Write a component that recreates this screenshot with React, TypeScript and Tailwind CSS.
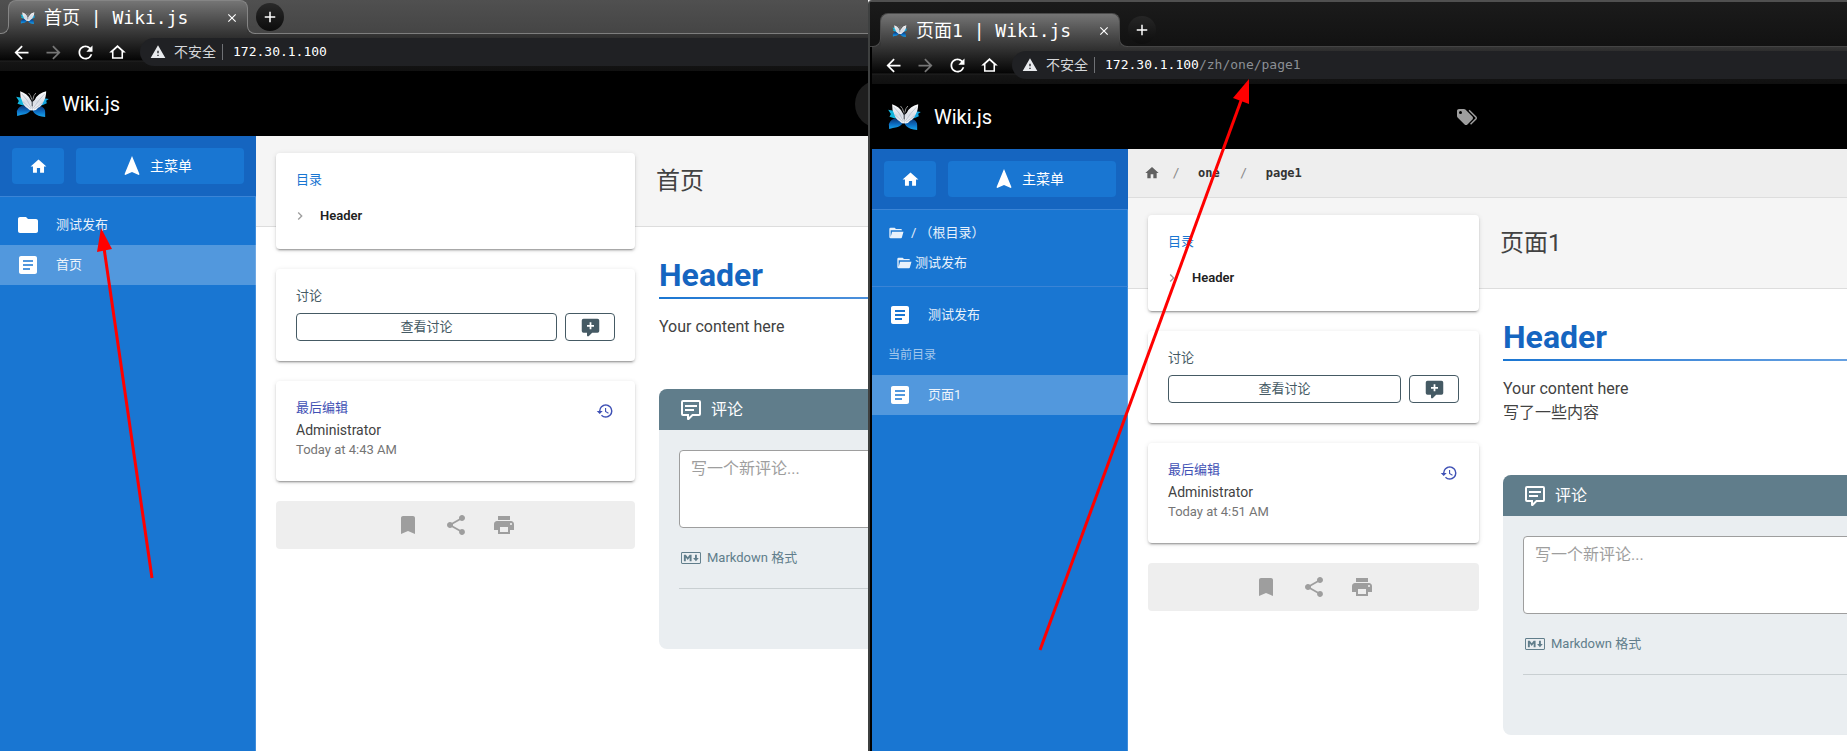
import type { ReactNode } from 'react';
import {
  MdArrowBack,
  MdArrowForward,
  MdArticle,
  MdBookmark,
  MdChevronRight,
  MdClose,
  MdFolder,
  MdHistory,
  MdHome,
  MdNavigation,
  MdAdd,
  MdPrint,
  MdRefresh,
  MdShare,
  MdWarning,
} from 'react-icons/md';

const PATHS = {
  browserHome: 'M12 5.69l5 4.5V18H7v-7.81l5-4.5M12 2.6L1.5 12H5v8h14v-8h3.5L12 2.6z',
  folderOpen:
    'M19 20H4a2 2 0 0 1-2-2V6a2 2 0 0 1 2-2h6l2 2h7a2 2 0 0 1 2 2H4v10l2.14-8h17.07l-2.28 8.5c-.23.87-1.01 1.5-1.93 1.5z',
  commentText:
    'M9 22a1 1 0 0 1-1-1v-3H4a2 2 0 0 1-2-2V4a2 2 0 0 1 2-2h16a2 2 0 0 1 2 2v12a2 2 0 0 1-2 2h-6.1l-3.7 3.71c-.2.19-.45.29-.7.29H9m1-6v3.08L13.08 16H20V4H4v12h6M6 7h12v2H6V7m0 4h9v2H6v-2z',
  commentPlus:
    'M9 22a1 1 0 0 1-1-1v-3H4a2 2 0 0 1-2-2V4a2 2 0 0 1 2-2h16a2 2 0 0 1 2 2v12a2 2 0 0 1-2 2h-6.1l-3.7 3.71c-.2.19-.45.29-.7.29H9m2-16v3H8v2h3v3h2v-3h3V9h-3V6h-2z',
  markdown:
    'M20.56 18H3.44C2.65 18 2 17.37 2 16.59V7.41C2 6.63 2.65 6 3.44 6h17.12c.79 0 1.44.63 1.44 1.41v9.18c0 .78-.65 1.41-1.44 1.41M3.44 6.94c-.26 0-.48.21-.48.47v9.18c0 .26.22.47.48.47h17.12c.26 0 .48-.21.48-.47V7.41c0-.26-.22-.47-.48-.47H3.44m1.45 8.25V8.81h1.92l1.92 2.35 1.93-2.35h1.92v6.38h-1.92v-3.66l-1.93 2.35-1.92-2.35v3.66H4.89m12.04 0l-2.88-3.1h1.92V8.81h1.92v3.28h1.92l-2.88 3.1',
  tags: 'M5.5 9A1.5 1.5 0 0 0 7 7.5 1.5 1.5 0 0 0 5.5 6 1.5 1.5 0 0 0 4 7.5 1.5 1.5 0 0 0 5.5 9m11.91 2.58c.36.36.59.86.59 1.42 0 .55-.22 1.05-.59 1.41l-5 5a1.996 1.996 0 0 1-2.83 0l-6.99-7C2.22 12.05 2 11.55 2 11V6c0-1.11.89-2 2-2h5c.55 0 1.05.22 1.41.58l7 7m-3.87-5.87 1-1 6.87 6.87c.37.36.59.87.59 1.42 0 .55-.22 1.05-.58 1.41l-5.38 5.38-1-1L20.75 13l-7.21-7.29z',
};

function Glyph({ path, className }: { path: string; className: string }) {
  return (
    <svg viewBox="0 0 24 24" fill="currentColor" fillRule="evenodd" aria-hidden="true" className={className}>
      <path d={path} />
    </svg>
  );
}

function Butterfly({ id, className }: { id: string; className: string }) {
  return (
    <svg viewBox="0 0 98 78" aria-hidden="true" className={className}>
      <defs>
        <linearGradient id={`${id}-wing`} x1="0" y1="0" x2="0" y2="1">
          <stop offset="0" stopColor="#ffffff" />
          <stop offset="0.55" stopColor="#d9dde5" />
          <stop offset="1" stopColor="#f5f7fa" />
        </linearGradient>
        <linearGradient id={`${id}-low`} x1="0" y1="0" x2="0" y2="1">
          <stop offset="0" stopColor="#0a3474" />
          <stop offset="0.55" stopColor="#0d6fc4" />
          <stop offset="1" stopColor="#17a5ec" />
        </linearGradient>
      </defs>
      <path d="M0 17 L16 20 L30 46 L18 43 L4 38 L8 30 Z" fill="#12b5dc" />
      <path d="M98 24 L84 22 L66 46 L80 42 L92 37 L90 29 Z" fill="#12a5e0" />
      <path d="M3 75 L2 60 Q10 42 28 44 L46 54 Q40 66 26 70 Q14 72 3 75 Z" fill={`url(#${id}-low)`} />
      <path d="M87 78 Q64 76 54 66 L46 54 L72 44 Q88 50 87 64 Z" fill={`url(#${id}-low)`} />
      <path d="M12 1 Q34 8 43 26 L48 34 L48 58 Q40 60 34 52 Q22 46 18 30 Q11 18 12 1 Z" fill={`url(#${id}-wing)`} />
      <path d="M90 1 Q66 6 56 26 L48 34 L48 58 Q60 60 66 50 Q76 46 82 32 Q90 20 90 1 Z" fill={`url(#${id}-wing)`} />
      <path d="M16 8 Q34 24 46 52 M86 8 Q68 26 51 52 M20 32 Q32 42 44 54 M80 34 Q68 44 54 54" fill="none" stroke="#aeb6c4" strokeWidth="2" />
      <path d="M47 26 Q44 12 37 6 M50 26 Q52 12 59 6" fill="none" stroke="#8f8f8f" strokeWidth="3" />
      <path d="M48 26 L48 46" stroke="#3c434e" strokeWidth="3" />
    </svg>
  );
}

type Tone = 'light' | 'dark';

function TabStrip({ title, tone, id }: { title: string; tone: Tone; id: string }) {
  const light = tone === 'light';
  const strip = light
    ? 'border-[#7e7e7e] bg-linear-to-b from-[#505050] to-[#454545]'
    : 'border-[#444444] bg-linear-to-b from-[#1b1b1b] to-[#121212] pl-[2px] pt-[11px]';
  const edge = light ? 'border-[#858585]' : 'border-[#4c4c4c]';
  const curve = light ? 'bg-[#464646]' : 'bg-[#131313]';
  return (
    <div className={`flex items-end border-b ${strip}`}>
      <span className="relative z-10 -mr-px -mb-px h-2 w-[9px] bg-[#353535]">
        <span className={`block h-full rounded-br-lg border-r border-b ${edge} ${curve}`} />
      </span>
      <div
        className={`-mb-px flex h-[34px] w-60 items-center rounded-t-lg border-x border-t bg-linear-to-b from-[#757575] to-[#353535] pr-2 pl-[11px] ${edge}`}
      >
        <Butterfly id={`${id}-tab`} className="h-3 w-4 shrink-0" />
        <span className="ml-2 flex-1 font-['DejaVu_Sans_Mono','Noto_Sans_CJK_SC',monospace] text-[18px] leading-6 whitespace-pre text-white">
          {title}
        </span>
        <button type="button" aria-label="关闭标签页" className="text-white">
          <MdClose className="size-[14px]" />
        </button>
      </div>
      <span className="relative z-10 -mb-px -ml-px h-2 w-[9px] bg-[#353535]">
        <span className={`block h-full rounded-bl-lg border-b border-l ${edge} ${curve}`} />
      </span>
      <button
        type="button"
        aria-label="新标签页"
        className={`mb-[2px] flex size-7 items-center justify-center rounded-full text-white ${
          light ? 'bg-linear-to-b from-[#2a2a2a] to-[#0c0c0c]' : 'bg-linear-to-b from-[#262626] to-[#0e0e0e]'
        }`}
      >
        <MdAdd className="size-[18px]" />
      </button>
    </div>
  );
}

function Toolbar({ host, path }: { host: string; path: string }) {
  return (
    <div className="flex bg-[linear-gradient(to_bottom,#353535_0px,#050505_26px,#222222_27px,#151515_28px,#101010_37px)] pt-1 pb-[5px] pl-[5px] text-white">
      <button type="button" aria-label="后退" className="flex w-8 items-center justify-center">
        <MdArrowBack className="size-[21px]" />
      </button>
      <button type="button" aria-label="前进" className="flex w-8 items-center justify-center text-[#767676]">
        <MdArrowForward className="size-[21px]" />
      </button>
      <button type="button" aria-label="重新加载" className="flex w-8 items-center justify-center">
        <MdRefresh className="size-[21px]" />
      </button>
      <button type="button" aria-label="主页" className="flex w-8 items-center justify-center">
        <Glyph path={PATHS.browserHome} className="size-[19px]" />
      </button>
      <div className="ml-[7px] flex h-7 flex-1 items-center rounded-l-full bg-[#202124] pl-[10px] whitespace-nowrap">
        <MdWarning className="size-4 text-[#e8eaed]" />
        <span className="ml-2 text-sm text-[#d5d7da]">不安全</span>
        <span className="mx-[6px] h-4 w-px bg-[#6f7175]" />
        <span className="pl-1 font-['DejaVu_Sans_Mono',monospace] text-[13px] text-white">
          {host}
          <span className="text-[#8b8f94]">{path}</span>
        </span>
      </div>
    </div>
  );
}

function NavItem({ icon, label, active = false }: { icon: ReactNode; label: string; active?: boolean }) {
  return (
    <a
      href="#page"
      className={`flex h-10 items-center gap-4 px-4 text-[13px] text-white ${active ? 'bg-white/25' : ''}`}
    >
      {icon}
      <span className="opacity-90">{label}</span>
    </a>
  );
}

function Sidebar({ children }: { children: ReactNode }) {
  return (
    <nav className="w-64 shrink-0 bg-[#1976d2] shadow-[inset_-1px_0_0_#3f8ddb]">
      <div className="flex gap-3 border-b border-[#3a84d6] bg-[#1565c0] p-3 text-white">
        <a href="#home" aria-label="首页" className="flex h-9 w-[52px] items-center justify-center rounded bg-[#1976d2]">
          <MdHome className="size-[19px]" />
        </a>
        <button
          type="button"
          className="flex h-9 flex-1 items-center justify-center gap-[6px] rounded bg-[#1976d2] pr-2 text-sm"
        >
          <MdNavigation className="size-6" />
          主菜单
        </button>
      </div>
      {children}
    </nav>
  );
}

const CARD =
  'rounded bg-white px-5 shadow-[0_3px_1px_-2px_rgba(0,0,0,0.2),0_2px_2px_0_rgba(0,0,0,0.14),0_1px_5px_0_rgba(0,0,0,0.12)]';

function InfoColumn({ edited }: { edited: string }) {
  return (
    <aside className="col-start-1 row-span-2 row-start-1 flex flex-col gap-5 pt-[17px] pl-5">
      <section className={`${CARD} h-24 pt-[17px]`}>
        <h2 className="text-[13px] leading-5 text-[#1976d2]">目录</h2>
        <a href="#header" className="mt-4 flex items-center gap-3 text-[13px] leading-5 font-semibold text-[#212121]">
          <MdChevronRight className="-ml-1 size-4 text-[#9e9e9e]" />
          Header
        </a>
      </section>
      <section className={`${CARD} pt-[17px] pb-5 text-[#455a64]`}>
        <h2 className="text-[13px] leading-5">讨论</h2>
        <div className="mt-[7px] flex gap-2">
          <button type="button" className="h-7 flex-1 rounded border border-[#455a64] text-[13px]">
            查看讨论
          </button>
          <button
            type="button"
            aria-label="新评论"
            className="flex h-7 w-[50px] items-center justify-center rounded border border-[#455a64]"
          >
            <Glyph path={PATHS.commentPlus} className="size-[21px]" />
          </button>
        </div>
      </section>
      <section className={`${CARD} flex h-[100px] justify-between pt-[17px]`}>
        <div>
          <h2 className="text-[13px] leading-5 text-[#3f51b5]">最后编辑</h2>
          <p className="text-sm leading-6 text-[#424242]">Administrator</p>
          <p className="text-[13px] leading-4 text-[#757575]">{edited}</p>
        </div>
        <button type="button" aria-label="历史" className="mt-1 mr-[1px] self-start text-[#3f51b5]">
          <MdHistory className="size-[18px]" />
        </button>
      </section>
      <div className="flex h-12 items-center justify-center gap-6 rounded bg-[#eeeeee] text-[#9e9e9e]">
        <button type="button" aria-label="书签">
          <MdBookmark className="size-6" />
        </button>
        <button type="button" aria-label="分享">
          <MdShare className="size-6" />
        </button>
        <button type="button" aria-label="打印">
          <MdPrint className="size-6" />
        </button>
      </div>
    </aside>
  );
}

function Article({ lines }: { lines: string[] }) {
  return (
    <article className="col-start-2 row-start-2 min-w-[700px] pt-7 pl-6">
      <h2 className="pb-[2px] text-[32px] leading-10 font-bold text-[#1565c0]">Header</h2>
      <div className="h-[2px] bg-linear-to-r from-[#1976d2] to-[#a3c8ed]" />
      <div className="mt-4 text-base leading-6 text-[#424242]">
        {lines.map((line) => (
          <p key={line}>{line}</p>
        ))}
      </div>
      <section className="mt-[50px] overflow-hidden rounded-lg bg-[#eaeef1] pb-[60px]">
        <h3 className="flex h-[41px] items-center gap-2 bg-[#607d8b] px-5 text-base text-white">
          <Glyph path={PATHS.commentText} className="size-6" />
          评论
        </h3>
        <div className="px-5 pt-5">
          <textarea
            aria-label="写一个新评论"
            placeholder="写一个新评论..."
            className="block h-[78px] w-full resize-none rounded border border-[#9e9e9e] bg-white px-[11px] py-[6px] text-base leading-6 placeholder:text-[#9e9e9e]"
          />
          <div className="mt-[18px] flex items-center gap-1 border-b border-[#c9cfd2] pb-[18px] text-[13px] text-[#607d8b]">
            <Glyph path={PATHS.markdown} className="size-6" />
            Markdown 格式
          </div>
        </div>
      </section>
    </article>
  );
}

function PageTitle({ title }: { title: string }) {
  return (
    <>
      <div className="col-span-2 col-start-1 row-start-1 border-b border-[#dddddd] bg-[#f5f5f5]" />
      <h1 className="col-start-2 row-start-1 flex h-[91px] items-center pb-[2px] pl-[21px] text-2xl text-[#424242]">
        {title}
      </h1>
    </>
  );
}

function Brand({ id }: { id: string }) {
  return (
    <a href="#home" className="flex items-center gap-[13px] text-xl text-white">
      <Butterfly id={`${id}-brand`} className="h-[26px] w-[33px]" />
      Wiki.js
    </a>
  );
}

export default function App() {
  return (
    <div className="relative grid min-h-screen grid-cols-[868fr_979fr] overflow-hidden bg-white font-['Roboto','Noto_Sans_CJK_SC',sans-serif]">
      <div className="flex min-w-0 flex-col overflow-hidden">
        <TabStrip title="首页 | Wiki.js" tone="light" id="left" />
        <Toolbar host="172.30.1.100" path="" />
        <header className="flex h-[65px] items-center justify-between bg-black pl-4">
          <Brand id="left" />
          <span className="-mr-[35px] size-12 rounded-full bg-[#1e1e1e]" />
        </header>
        <div className="flex flex-1">
          <Sidebar>
            <div className="pt-2">
              <NavItem icon={<MdFolder className="size-6" />} label="测试发布" />
              <NavItem icon={<MdArticle className="size-6" />} label="首页" active />
            </div>
          </Sidebar>
          <main className="grid min-w-0 flex-1 grid-cols-[379px_minmax(0,1fr)] grid-rows-[auto_1fr]">
            <PageTitle title="首页" />
            <InfoColumn edited="Today at 4:43 AM" />
            <Article lines={['Your content here']} />
          </main>
        </div>
      </div>

      <div className="flex min-w-0 flex-col overflow-hidden rounded-tl border-t-2 border-l-2 border-t-[#505050] border-l-[#3e4040] bg-black">
        <TabStrip title="页面1 | Wiki.js" tone="dark" id="right" />
        <div className="ml-[2px] flex flex-1 flex-col">
          <Toolbar host="172.30.1.100" path="/zh/one/page1" />
          <header className="flex h-[65px] items-center justify-between bg-black pl-4">
            <Brand id="right" />
            <button type="button" aria-label="标签" className="mr-[368px] text-[#9e9e9e]">
              <Glyph path={PATHS.tags} className="size-6" />
            </button>
          </header>
          <div className="flex flex-1 bg-white">
            <Sidebar>
              <div className="border-b border-[#3a84d6] py-2 text-[13px] text-white/90">
                <a href="#root" className="flex h-[30px] items-center gap-[7px] pl-4">
                  <Glyph path={PATHS.folderOpen} className="size-4" />
                  <span className="whitespace-pre">/ （根目录）</span>
                </a>
                <a href="#one" className="flex h-[30px] items-center gap-[3px] pl-6">
                  <Glyph path={PATHS.folderOpen} className="size-4" />
                  测试发布
                </a>
              </div>
              <div className="pt-2">
                <NavItem icon={<MdArticle className="size-6" />} label="测试发布" />
                <div className="flex h-10 items-center px-4 text-xs text-white/60">当前目录</div>
                <NavItem icon={<MdArticle className="size-6" />} label="页面1" active />
              </div>
            </Sidebar>
            <div className="flex min-w-0 flex-1 flex-col">
              <div className="flex h-[49px] items-center border-b border-[#dddddd] bg-[#eeeeee] pl-4 font-['DejaVu_Sans_Mono',monospace] text-xs font-bold text-[#333333]">
                <a href="#home" aria-label="首页">
                  <MdHome className="size-4 text-[#616161]" />
                </a>
                <span className="w-8 text-center font-normal text-[#8a8a8a]">/</span>
                <a href="#one" className="ml-[6px]">
                  one
                </a>
                <span className="ml-2 w-8 text-center font-normal text-[#8a8a8a]">/</span>
                <a href="#page1" className="ml-[6px]">
                  page1
                </a>
              </div>
              <main className="grid min-w-0 flex-1 grid-cols-[351px_minmax(0,1fr)] grid-rows-[auto_1fr]">
                <PageTitle title="页面1" />
                <InfoColumn edited="Today at 4:51 AM" />
                <Article lines={['Your content here', '写了一些内容']} />
              </main>
            </div>
          </div>
        </div>
      </div>

      <svg aria-hidden="true" className="pointer-events-none absolute inset-0 h-full w-full">
        <g fill="#ff0000" stroke="none">
          <path d="M101 228 L97 252 L112 249 Z" />
          <path d="M1249 79 L1233 98 L1249 104 Z" />
        </g>
        <g stroke="#ff0000" strokeWidth="3" fill="none">
          <path d="M152 578 L104 248" />
          <path d="M1040 650 L1242 98" />
        </g>
      </svg>
    </div>
  );
}
